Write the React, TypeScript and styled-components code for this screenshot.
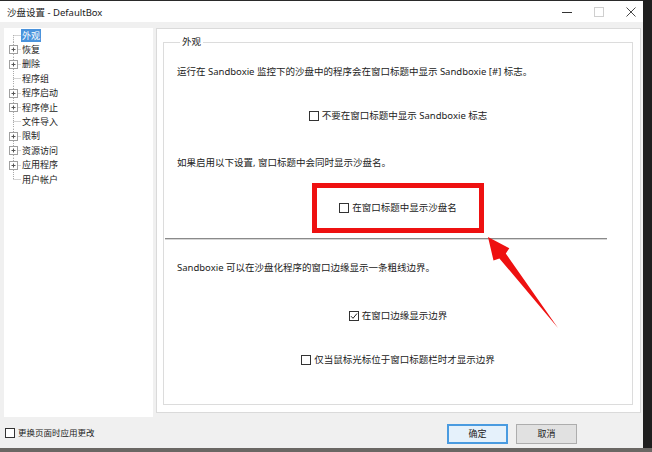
import React from "react";
import styled, { createGlobalStyle } from "styled-components";

const Global = createGlobalStyle`
  html, body { margin: 0; padding: 0; background: #1f1f1f; overflow: hidden; }
  #root { width: 652px; height: 452px; }
  * { box-sizing: border-box; }
`;

const FONT = `"Noto Sans", "Noto Sans CJK SC", sans-serif`;

const Screen = styled.div`
  position: relative;
  width: 652px;
  height: 452px;
  display: flex;
  flex-direction: column;
  font-family: ${FONT};
  color: #222;
`;

const Upper = styled.div`
  display: flex;
  height: 448px;
`;

const Window = styled.div`
  width: 643px;
  display: flex;
  flex-direction: column;
  background: #f0f0f0;
  border-top: 1px solid #2a2a2a;
`;

const DarkStrip = styled.div`
  flex: 1;
  background: #1f1f1f;
`;

const BottomBand = styled.div`
  height: 4px;
  background: #6a6764;
`;

const TitleBar = styled.div`
  height: 21px;
  background: #fff;
  display: flex;
  align-items: center;
  justify-content: space-between;
  padding-left: 7px;
`;

const TitleText = styled.span`
  font-size: 9.5px;
  color: #222;
`;

const Controls = styled.div`
  display: flex;
  gap: 12px;
  padding-right: 2px;
`;

const WinButton = styled.div`
  width: 20px;
  height: 14px;
  display: flex;
  align-items: center;
  justify-content: center;
`;

const Body = styled.div`
  display: flex;
  gap: 3px;
  padding: 6px 2px 0 4px;
  height: 395px;
`;

const Tree = styled.div`
  width: 149px;
  background: #fff;
  display: flex;
  flex-direction: column;
`;

const TreeRow = styled.div`
  height: 14.4px;
  display: flex;
  align-items: center;
  font-size: 9px;
  line-height: 13px;
`;

const TreeLabel = styled.span<{ $selected?: boolean }>`
  padding: 0 1px;
  margin-left: -1px;
  background: ${(p) => (p.$selected ? "#4a93dc" : "transparent")};
  color: ${(p) => (p.$selected ? "#fff" : "#222")};
`;

const Panel = styled.div`
  flex: 1;
  height: 385px;
  background: #fff;
  border: 1px solid #dadada;
  padding: 7px 7px 7px 6px;
  display: flex;
  flex-direction: column;
`;

const GroupBox = styled.fieldset`
  flex: 1;
  margin: 0;
  padding: 0 13px;
  border: 1px solid #dcdcdc;
  min-width: 0;
`;

const Legend = styled.legend`
  font-size: 9.5px;
  line-height: 12px;
  padding: 0 2px;
  margin-left: 3px;
  color: #222;
`;

const GroupInner = styled.div`
  display: flex;
  flex-direction: column;
  align-items: center;
`;

const Para = styled.div<{ $mt: number }>`
  align-self: stretch;
  margin-top: ${(p) => p.$mt}px;
  font-size: 9.5px;
  line-height: 14px;
  white-space: nowrap;
`;

const CheckRow = styled.label<{ $mt?: number; $size?: number }>`
  display: flex;
  align-items: center;
  gap: 3px;
  margin-top: ${(p) => p.$mt ?? 0}px;
  font-size: ${(p) => p.$size ?? 9.5}px;
  line-height: 14px;
  height: 14px;
  white-space: nowrap;
`;

const Box = styled.span`
  width: 10px;
  height: 10px;
  border: 1px solid #333;
  background: #fff;
  display: inline-flex;
  align-items: center;
  justify-content: center;
`;

const RedFrame = styled.div`
  margin-top: 13px;
  width: 172px;
  height: 50px;
  border: 5px solid #ee1111;
  display: flex;
  align-items: center;
  justify-content: center;
`;

const Divider = styled.div`
  align-self: flex-start;
  margin-left: -12px;
  margin-top: 5px;
  width: 442px;
  height: 2px;
  border-top: 1px solid #8a8a8a;
  border-bottom: 1px solid #d6d6d6;
`;

const Footer = styled.div`
  height: 31px;
  display: flex;
  align-items: center;
  justify-content: space-between;
  padding: 0 66px 0 5px;
`;

const Buttons = styled.div`
  display: flex;
  gap: 8px;
`;

const DlgButton = styled.button<{ $default?: boolean }>`
  width: 61px;
  height: 20px;
  margin-top: 2px;
  font-family: ${FONT};
  font-size: 9px;
  color: #222;
  padding: 0;
  background: ${(p) => (p.$default ? "#e5f1fb" : "#e1e1e1")};
  border: ${(p) => (p.$default ? "2px solid #4a9be0" : "1px solid #adadad")};
`;

const Overlay = styled.svg`
  position: absolute;
  left: 0;
  top: 0;
  pointer-events: none;
`;

type Kind = "first" | "mid" | "last";

const Gutter: React.FC<{ kind: Kind; plus?: boolean }> = ({ kind, plus }) => (
  <svg width="18" height="14.4" viewBox="0 0 18 14.4" style={{ flexShrink: 0 }}>
    <line
      x1="9.5"
      x2="9.5"
      y1={kind === "first" ? 7.2 : 0}
      y2={kind === "last" ? 7.2 : 14.4}
      stroke="#a8a8a8"
      strokeDasharray="1 1"
    />
    <line x1="9.5" x2="17" y1="7.5" y2="7.5" stroke="#a8a8a8" strokeDasharray="1 1" />
    {plus && (
      <g>
        <rect x="5.5" y="3.5" width="8" height="8" fill="#fff" stroke="#a0a0a0" />
        <line x1="7.5" x2="11.5" y1="7.5" y2="7.5" stroke="#555" />
        <line x1="9.5" x2="9.5" y1="5.5" y2="9.5" stroke="#555" />
      </g>
    )}
  </svg>
);

const treeItems: { label: string; plus?: boolean }[] = [
  { label: "外观" },
  { label: "恢复", plus: true },
  { label: "删除", plus: true },
  { label: "程序组" },
  { label: "程序启动", plus: true },
  { label: "程序停止", plus: true },
  { label: "文件导入" },
  { label: "限制", plus: true },
  { label: "资源访问", plus: true },
  { label: "应用程序", plus: true },
  { label: "用户帐户" },
];

const Check: React.FC<{ checked?: boolean }> = ({ checked }) => (
  <Box>
    {checked && (
      <svg width="8" height="8" viewBox="0 0 8 8">
        <path d="M1 4.2 L3 6.3 L7 1.5" fill="none" stroke="#222" strokeWidth="1" />
      </svg>
    )}
  </Box>
);

export default function App() {
  return (
    <Screen>
      <Global />
      <Upper>
        <Window>
          <TitleBar>
            <TitleText>沙盘设置 - DefaultBox</TitleText>
            <Controls>
              <WinButton>
                <svg width="10" height="10" viewBox="0 0 10 10">
                  <line x1="0" x2="10" y1="5.5" y2="5.5" stroke="#333" />
                </svg>
              </WinButton>
              <WinButton>
                <svg width="10" height="10" viewBox="0 0 10 10">
                  <rect x="0.5" y="0.5" width="9" height="9" fill="none" stroke="#cfcfcf" />
                </svg>
              </WinButton>
              <WinButton>
                <svg width="10" height="10" viewBox="0 0 10 10">
                  <path d="M0.5 0.5 L9.5 9.5 M9.5 0.5 L0.5 9.5" stroke="#333" strokeWidth="0.9" />
                </svg>
              </WinButton>
            </Controls>
          </TitleBar>
          <Body>
            <Tree>
              {treeItems.map((it, i) => (
                <TreeRow key={it.label}>
                  <Gutter
                    kind={i === 0 ? "first" : i === treeItems.length - 1 ? "last" : "mid"}
                    plus={it.plus}
                  />
                  <TreeLabel $selected={i === 0}>{it.label}</TreeLabel>
                </TreeRow>
              ))}
            </Tree>
            <Panel>
              <GroupBox>
                <Legend>外观</Legend>
                <GroupInner>
                  <Para $mt={17}>
                    运行在 Sandboxie 监控下的沙盘中的程序会在窗口标题中显示 Sandboxie [#] 标志。
                  </Para>
                  <CheckRow $mt={30}>
                    <Check />
                    不要在窗口标题中显示 Sandboxie 标志
                  </CheckRow>
                  <Para $mt={33}>如果启用以下设置, 窗口标题中会同时显示沙盘名。</Para>
                  <RedFrame>
                    <CheckRow>
                      <Check />
                      在窗口标题中显示沙盘名
                    </CheckRow>
                  </RedFrame>
                  <Divider />
                  <Para $mt={21}>Sandboxie 可以在沙盘化程序的窗口边缘显示一条粗线边界。</Para>
                  <CheckRow $mt={34}>
                    <Check checked />
                    在窗口边缘显示边界
                  </CheckRow>
                  <CheckRow $mt={30}>
                    <Check />
                    仅当鼠标光标位于窗口标题栏时才显示边界
                  </CheckRow>
                </GroupInner>
              </GroupBox>
            </Panel>
          </Body>
          <Footer>
            <CheckRow $size={8.5}>
              <Check />
              更换页面时应用更改
            </CheckRow>
            <Buttons>
              <DlgButton $default>确定</DlgButton>
              <DlgButton>取消</DlgButton>
            </Buttons>
          </Footer>
        </Window>
        <DarkStrip />
      </Upper>
      <BottomBand />
      <Overlay width="652" height="452" viewBox="0 0 652 452">
        <polygon
          points="488,237 509.3,248.3 505.8,253.6 558,328 499.4,258.4 493.5,260.5"
          fill="#ee1111"
        />
      </Overlay>
    </Screen>
  );
}
